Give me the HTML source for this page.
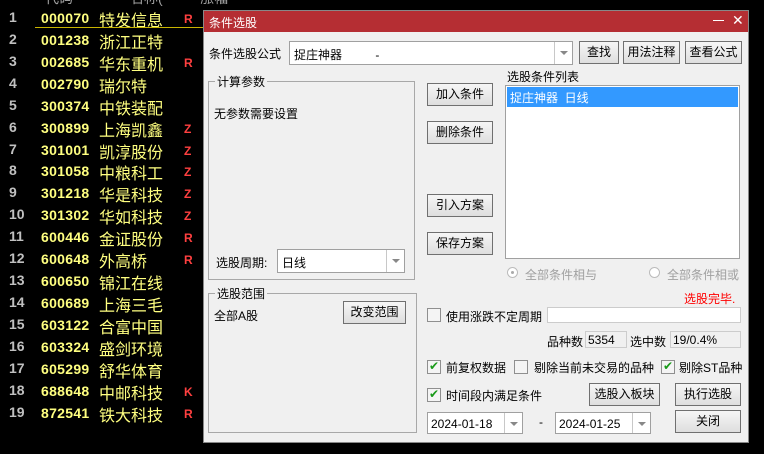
<!DOCTYPE html>
<html><head><meta charset="utf-8"><style>
*{margin:0;padding:0;box-sizing:border-box}
body{width:764px;height:454px;background:#000;position:relative;overflow:hidden;font-family:"Liberation Sans","Noto Sans CJK SC",sans-serif;font-size:12px}
.a{position:absolute;white-space:nowrap}
.row{position:absolute;left:0;height:22px;width:203px;font-family:"Liberation Sans","WenQuanYi Zen Hei",sans-serif}
.n{position:absolute;left:9px;width:22px;color:#c0c0c0;font-size:14px;font-weight:bold;top:2px}
.c{position:absolute;left:41px;color:#ffff80;font-size:14px;font-weight:bold;top:3px;letter-spacing:0.3px}
.nm{position:absolute;left:99px;color:#ffff80;font-size:16px;top:0px}
.f{position:absolute;left:184px;color:#ff4040;font-size:12px;font-weight:bold;top:5px}
.hd{position:absolute;top:-12px;color:#a0a0a0;font-size:14px}
.dlg{position:absolute;left:203px;top:10px;width:546px;height:433px;background:#f0f0f0;border:1px solid #888}
.tb{position:absolute;left:0;top:0;width:100%;height:21px;background:#b52e33;color:#fff;font-size:12px}
.btn{position:absolute;border:1px solid #707070;background:linear-gradient(#f6f6f6,#dedede);text-align:center;font-size:12px;color:#000;line-height:20px}
.grp{position:absolute;border:1px solid #a8a8a8}
.gl{position:absolute;top:-9px;left:6px;background:#f0f0f0;padding:0 2px;font-size:12px}
.box{position:absolute;background:#fff;border:1px solid #a0a0a0}
.cb{position:absolute;width:14px;height:14px;border:1px solid #8f8f8f;background:#f4f4f4}
.ck::after{content:"✔";position:absolute;left:1px;top:-2px;color:#1a9a1a;font-size:12px}
.t{position:absolute;white-space:nowrap;font-size:12px;color:#000}
.dd{position:absolute;right:0;top:0;bottom:0;width:18px;border-left:1px solid #c8c8c8}
.dd::after{content:"";position:absolute;left:5px;top:9px;border-left:4px solid transparent;border-right:4px solid transparent;border-top:4px solid #888}
</style></head><body>
<div class="hd" style="left:45px">代码</div><div class="hd" style="left:130px">名称(</div><div class="hd" style="left:200px">涨幅</div>
<div class="row" style="top:7px"><span class="n">1</span><span class="c">000070</span><span class="nm">特发信息</span><span class="f">R</span></div>
<div class="a" style="left:35px;top:27px;width:168px;height:1px;background:#c8b400"></div>
<div class="row" style="top:29px"><span class="n">2</span><span class="c">001238</span><span class="nm">浙江正特</span></div>
<div class="row" style="top:51px"><span class="n">3</span><span class="c">002685</span><span class="nm">华东重机</span><span class="f">R</span></div>
<div class="row" style="top:73px"><span class="n">4</span><span class="c">002790</span><span class="nm">瑞尔特</span></div>
<div class="row" style="top:95px"><span class="n">5</span><span class="c">300374</span><span class="nm">中铁装配</span></div>
<div class="row" style="top:117px"><span class="n">6</span><span class="c">300899</span><span class="nm">上海凯鑫</span><span class="f">Z</span></div>
<div class="row" style="top:139px"><span class="n">7</span><span class="c">301001</span><span class="nm">凯淳股份</span><span class="f">Z</span></div>
<div class="row" style="top:160px"><span class="n">8</span><span class="c">301058</span><span class="nm">中粮科工</span><span class="f">Z</span></div>
<div class="row" style="top:182px"><span class="n">9</span><span class="c">301218</span><span class="nm">华是科技</span><span class="f">Z</span></div>
<div class="row" style="top:204px"><span class="n">10</span><span class="c">301302</span><span class="nm">华如科技</span><span class="f">Z</span></div>
<div class="row" style="top:226px"><span class="n">11</span><span class="c">600446</span><span class="nm">金证股份</span><span class="f">R</span></div>
<div class="row" style="top:248px"><span class="n">12</span><span class="c">600648</span><span class="nm">外高桥</span><span class="f">R</span></div>
<div class="row" style="top:270px"><span class="n">13</span><span class="c">600650</span><span class="nm">锦江在线</span></div>
<div class="row" style="top:292px"><span class="n">14</span><span class="c">600689</span><span class="nm">上海三毛</span></div>
<div class="row" style="top:314px"><span class="n">15</span><span class="c">603122</span><span class="nm">合富中国</span></div>
<div class="row" style="top:336px"><span class="n">16</span><span class="c">603324</span><span class="nm">盛剑环境</span></div>
<div class="row" style="top:358px"><span class="n">17</span><span class="c">605299</span><span class="nm">舒华体育</span></div>
<div class="row" style="top:380px"><span class="n">18</span><span class="c">688648</span><span class="nm">中邮科技</span><span class="f">K</span></div>
<div class="row" style="top:402px"><span class="n">19</span><span class="c">872541</span><span class="nm">铁大科技</span><span class="f">R</span></div>

<div class="dlg">
<div class="tb"><span class="a" style="left:5px;top:3px">条件选股</span><span class="a" style="left:509px;top:9px;width:11px;height:1px;background:#fff"></span><span class="a" style="left:528px;top:1px;font-size:14px">✕</span></div>
<span class="t" style="left:5px;top:34px">条件选股公式</span>
<div class="box" style="left:85px;top:30px;width:284px;height:24px"><span class="t" style="left:4px;top:4px">捉庄神器&nbsp;&nbsp;&nbsp;&nbsp;&nbsp;&nbsp;&nbsp;&nbsp;&nbsp;&nbsp;-</span><div class="dd"></div></div>
<div class="btn" style="left:375px;top:30px;width:40px;height:23px">查找</div>
<div class="btn" style="left:419px;top:30px;width:57px;height:23px">用法注释</div>
<div class="btn" style="left:481px;top:30px;width:57px;height:23px">查看公式</div>

<div class="grp" style="left:4px;top:70px;width:207px;height:199px"><span class="gl">计算参数</span>
<span class="t" style="left:5px;top:23px">无参数需要设置</span>
<span class="t" style="left:7px;top:172px">选股周期:</span>
<div class="box" style="left:68px;top:167px;width:128px;height:24px;background:#fff"><span class="t" style="left:4px;top:4px">日线</span><div class="dd"></div></div>
</div>
<div class="grp" style="left:4px;top:282px;width:209px;height:140px"><span class="gl">选股范围</span>
<span class="t" style="left:5px;top:13px">全部A股</span>
<div class="btn" style="left:134px;top:7px;width:63px;height:23px">改变范围</div>
</div>

<div class="btn" style="left:223px;top:72px;width:66px;height:23px">加入条件</div>
<div class="btn" style="left:223px;top:110px;width:66px;height:23px">删除条件</div>
<div class="btn" style="left:223px;top:183px;width:66px;height:23px">引入方案</div>
<div class="btn" style="left:223px;top:221px;width:66px;height:23px">保存方案</div>

<span class="t" style="left:303px;top:57px">选股条件列表</span>
<div class="box" style="left:301px;top:74px;width:235px;height:174px"><div class="a" style="left:1px;top:1px;width:231px;height:20px;background:#3399ff;color:#fff;font-size:12px;padding:2px 3px">捉庄神器&nbsp;&nbsp;日线</div></div>

<div class="a" style="left:303px;top:256px;width:11px;height:11px;border-radius:50%;border:1px solid #bbb;background:#fff"><div class="a" style="left:3px;top:3px;width:3px;height:3px;border-radius:50%;background:#aaa"></div></div>
<span class="t" style="left:321px;top:255px;color:#a0a0a0">全部条件相与</span>
<div class="a" style="left:445px;top:256px;width:11px;height:11px;border-radius:50%;border:1px solid #bbb;background:#fff"></div>
<span class="t" style="left:463px;top:255px;color:#a0a0a0">全部条件相或</span>
<span class="t" style="left:480px;top:279px;color:#ff0000">选股完毕.</span>

<div class="cb" style="left:223px;top:297px"></div><span class="t" style="left:242px;top:297px">使用涨跌不定周期</span>
<div class="box" style="left:343px;top:296px;width:194px;height:16px;border-color:#ccc"></div>
<span class="t" style="left:343px;top:322px">品种数</span>
<div class="a" style="left:381px;top:320px;width:42px;height:17px;border:1px solid #ccc;font-size:12px;padding:1px 2px">5354</div>
<span class="t" style="left:426px;top:322px">选中数</span>
<div class="a" style="left:466px;top:320px;width:71px;height:17px;border:1px solid #ccc;font-size:12px;padding:1px 2px">19/0.4%</div>

<div class="cb ck" style="left:223px;top:349px"></div><span class="t" style="left:242px;top:348px">前复权数据</span>
<div class="cb" style="left:310px;top:349px"></div><span class="t" style="left:330px;top:348px">剔除当前未交易的品种</span>
<div class="cb ck" style="left:457px;top:349px"></div><span class="t" style="left:475px;top:348px">剔除ST品种</span>
<div class="cb ck" style="left:223px;top:377px"></div><span class="t" style="left:242px;top:376px">时间段内满足条件</span>
<div class="btn" style="left:385px;top:372px;width:71px;height:23px">选股入板块</div>
<div class="btn" style="left:471px;top:372px;width:66px;height:23px">执行选股</div>
<div class="box" style="left:223px;top:401px;width:96px;height:22px"><span class="t" style="left:3px;top:4px;font-size:12px">2024-01-18</span><div class="dd"></div></div>
<span class="t" style="left:335px;top:404px">-</span>
<div class="box" style="left:351px;top:401px;width:96px;height:22px"><span class="t" style="left:3px;top:4px;font-size:12px">2024-01-25</span><div class="dd"></div></div>
<div class="btn" style="left:471px;top:399px;width:66px;height:23px">关闭</div>
</div>
</body></html>
